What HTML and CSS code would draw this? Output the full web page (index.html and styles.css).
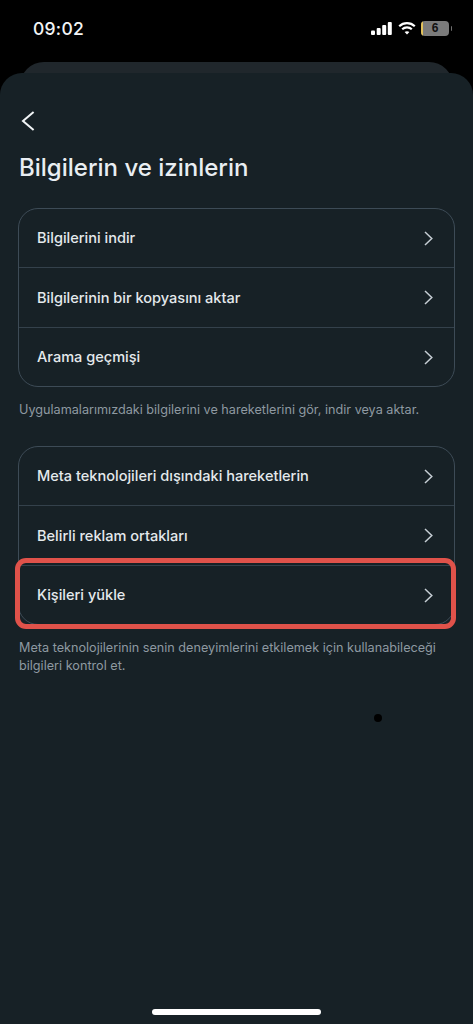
FILE: index.html
```html
<!DOCTYPE html>
<html lang="tr">
<head>
<meta charset="utf-8">
<title>Bilgilerin ve izinlerin</title>
<link rel="stylesheet" href="styles.css">
</head>
<body>
<div class="phone">
  <header class="status">
    <span class="time">09:02</span>
    <div class="status-icons">
      <svg class="signal" width="21" height="13" viewBox="0 0 21 13"><rect x="0" y="8.5" width="4" height="4.5" rx="1"/><rect x="5.7" y="6" width="4" height="7" rx="1"/><rect x="11.2" y="3" width="4" height="10" rx="1"/><rect x="16.8" y="0" width="4" height="13" rx="1"/></svg>
      <svg class="wifi" width="18" height="14" viewBox="0 0 18 14" fill="none"><path d="M1.2 5.2C5.6 1 12.4 1 16.8 5.2" stroke="#fff" stroke-width="2.2"/><path d="M4.2 8.2C6.9 5.7 11.1 5.7 13.8 8.2" stroke="#fff" stroke-width="2.2"/><path d="M9 13.6 6.6 11C8 9.9 10 9.9 11.4 11Z" fill="#fff"/></svg>
      <div class="battery"><span class="battery-level"></span><span class="battery-num">6</span></div>
      <span class="battery-cap"></span>
    </div>
  </header>
  <div class="sheet-peek"></div>
  <main class="sheet">
    <button class="back" aria-label="Geri">
      <svg width="14" height="20" viewBox="0 0 14 20" fill="none"><path d="M12.6 1 2 10l10.6 9" stroke="#f1f4f6" stroke-width="2"/></svg>
    </button>
    <h1 class="title">Bilgilerin ve izinlerin</h1>

    <section class="card">
      <div class="row"><span>Bilgilerini indir</span><svg class="chev" width="9" height="15" viewBox="0 0 9 15" fill="none"><path d="M1 1l6.8 6.5L1 14"/></svg></div>
      <div class="row"><span>Bilgilerinin bir kopyasını aktar</span><svg class="chev" width="9" height="15" viewBox="0 0 9 15" fill="none"><path d="M1 1l6.8 6.5L1 14"/></svg></div>
      <div class="row"><span>Arama geçmişi</span><svg class="chev" width="9" height="15" viewBox="0 0 9 15" fill="none"><path d="M1 1l6.8 6.5L1 14"/></svg></div>
    </section>
    <p class="note">Uygulamalarımızdaki bilgilerini ve hareketlerini gör, indir veya aktar.</p>

    <section class="card card-second">
      <div class="row"><span>Meta teknolojileri dışındaki hareketlerin</span><svg class="chev" width="9" height="15" viewBox="0 0 9 15" fill="none"><path d="M1 1l6.8 6.5L1 14"/></svg></div>
      <div class="row"><span>Belirli reklam ortakları</span><svg class="chev" width="9" height="15" viewBox="0 0 9 15" fill="none"><path d="M1 1l6.8 6.5L1 14"/></svg></div>
      <div class="row row-marked"><span>Kişileri yükle</span><svg class="chev" width="9" height="15" viewBox="0 0 9 15" fill="none"><path d="M1 1l6.8 6.5L1 14"/></svg><div class="marker"></div></div>
    </section>
    <p class="note">Meta teknolojilerinin senin deneyimlerini etkilemek için kullanabileceği bilgileri kontrol et.</p>

    <span class="dot"></span>
    <div class="home-bar"></div>
  </main>
</div>
</body>
</html>
```
FILE: styles.css
```css
* { box-sizing: border-box; }
html, body { margin: 0; padding: 0; background: #000; }
body { font-family: Inter, "Noto Sans", "Liberation Sans", sans-serif; }

.phone {
  width: 473px;
  height: 1024px;
  display: flex;
  flex-direction: column;
  overflow: hidden;
  background: #000;
}

.status {
  height: 62px;
  flex: none;
  padding: 17px 21px 0 33px;
  display: flex;
  justify-content: space-between;
  align-items: flex-start;
  color: #fff;
}
.time { margin-top: 1px; font-size: 17.5px; font-weight: 500; line-height: 22px; letter-spacing: .25px; color: #f2f4f5; }
.status-icons { display: flex; align-items: center; gap: 5px; height: 22px; }
.signal { fill: #fff; margin-right: 1px; }
.battery {
  position: relative;
  width: 28px;
  height: 15px;
  border-radius: 4px;
  background: #7b7b7b;
  color: #111;
  display: flex;
  align-items: center;
  justify-content: center;
  overflow: hidden;
}
.battery-level { position: absolute; left: 0; top: 0; bottom: 0; width: 2px; background: #e2c15a; }
.battery-num { font-size: 12px; font-weight: 700; line-height: 15px; font-family: "Liberation Sans", sans-serif; }
.battery-cap { width: 1.5px; height: 5px; background: #6f6f6f; margin-left: -3.5px; border-radius: 0 1px 1px 0; }

.sheet-peek {
  flex: none;
  height: 40px;
  margin: 0 20px -29px;
  background: #20272c;
  border-radius: 24px 24px 0 0;
}
.sheet {
  position: relative;
  flex: 1;
  display: flex;
  flex-direction: column;
  padding: 0 18px;
  background: #172126;
  border-radius: 22px 22px 0 0;
}

.back {
  align-self: flex-start;
  background: none;
  border: 0;
  padding: 0;
  margin: 38px 0 0 3px;
  height: 20px;
  display: block;
}
.back svg { display: block; }

.title {
  margin: 22px 0 0 1px;
  font-size: 24px;
  line-height: 30px;
  font-weight: 500;
  color: #e9eef2;
}

.card {
  margin-top: 25px;
  border: 1px solid #3d4b56;
  border-radius: 20px;
  width: 437px;
}
.card-second { margin-top: 28px; }

.row {
  position: relative;
  height: 60px;
  padding: 0 21.5px 0 18px;
  display: flex;
  align-items: center;
  justify-content: space-between;
  font-size: 14.55px;
  font-weight: 500;
  color: #e4e9ec;
  border-top: 1px solid #34414b;
}
.row:first-child { height: 58px; border-top: 0; }
.row:last-child { height: 59px; }
.chev { stroke: #c6ced4; stroke-width: 1.5; flex: none; }

.marker {
  position: absolute;
  left: -4px;
  right: -2px;
  top: -8px;
  bottom: -5px;
  border: 5px solid #e0524a;
  border-radius: 11px;
}

.note {
  margin: 14px 0 0 1px;
  font-size: 12.65px;
  line-height: 17.4px;
  color: #8e99a1;
}

.dot {
  position: absolute;
  left: 374px;
  top: 641px;
  width: 8px;
  height: 8px;
  border-radius: 50%;
  background: #000;
}

.home-bar {
  margin: auto 0 9px 134px;
  width: 169px;
  height: 6px;
  border-radius: 3px;
  background: #fff;
  flex: none;
}
```
